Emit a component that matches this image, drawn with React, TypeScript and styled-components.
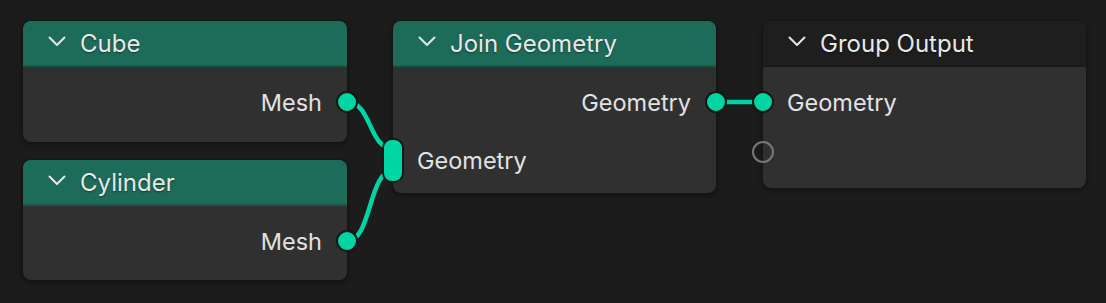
import styled, { createGlobalStyle } from 'styled-components'

const TEAL = '#00d6a3'

const GlobalStyle = createGlobalStyle`
  html, body {
    margin: 0;
    padding: 0;
    background: #1c1c1c;
  }
  body {
    font-family: Inter, 'Noto Sans', 'DejaVu Sans', sans-serif;
  }
`

const Canvas = styled.div`
  position: relative;
  width: 1106px;
  height: 303px;
  background: #1c1c1c;
  overflow: hidden;
`

const Links = styled.svg`
  position: absolute;
  left: 0;
  top: 0;
  width: 1106px;
  height: 303px;
  pointer-events: none;
`

const Node = styled.div<{ $x: number; $y: number; $w: number; $h: number }>`
  position: absolute;
  left: ${(p) => p.$x}px;
  top: ${(p) => p.$y}px;
  width: ${(p) => p.$w}px;
  height: ${(p) => p.$h}px;
  display: flex;
  flex-direction: column;
  background: #303030;
  border-radius: 8px;
  box-shadow: 0 0 0 1px #151515, 0 2px 6px rgba(0, 0, 0, 0.45);
`

const Header = styled.div<{ $dark?: boolean }>`
  height: 46px;
  box-sizing: border-box;
  display: flex;
  align-items: center;
  gap: 14px;
  padding-left: 25px;
  background: ${(p) => (p.$dark ? '#1e1e1e' : '#1d6c5a')};
  border-bottom: 2px solid ${(p) => (p.$dark ? '#191919' : '#1a5849')};
  border-radius: 8px 8px 0 0;
  color: #e8e8e8;
  font-size: 24px;
  text-shadow: 0 1px 2px rgba(0, 0, 0, 0.45);
`

const Chevron = styled.svg`
  width: 18px;
  height: 11px;
  margin-top: -3px;
  flex: none;
`

const Body = styled.div`
  flex: 1;
  display: flex;
  flex-direction: column;
  padding-top: 10px;
`

const Row = styled.div<{ $side: 'in' | 'out'; $h?: number }>`
  position: relative;
  height: ${(p) => p.$h ?? 50}px;
  display: flex;
  align-items: center;
  justify-content: ${(p) => (p.$side === 'out' ? 'flex-end' : 'flex-start')};
  padding: 0 25px 0 24px;
  color: #e2e2e2;
  font-size: 23.5px;
`

const Socket = styled.span<{ $side: 'in' | 'out'; $empty?: boolean }>`
  position: absolute;
  top: 50%;
  ${(p) => (p.$side === 'out' ? 'right: -11px;' : 'left: -11px;')}
  width: 18px;
  height: 18px;
  margin-top: -11px;
  border-radius: 50%;
  border: 2px solid ${(p) => (p.$empty ? '#777777' : '#161616')};
  background: ${(p) => (p.$empty ? 'transparent' : TEAL)};
`

const MultiSocket = styled.span`
  position: absolute;
  top: 50%;
  left: -11px;
  width: 18px;
  height: 41px;
  margin-top: -22px;
  border-radius: 10px;
  border: 2px solid #161616;
  background: ${TEAL};
`

const ChevronIcon = () => (
  <Chevron viewBox='0 0 18 11'>
    <polyline points='1.5,1.5 9,9 16.5,1.5' fill='none' stroke='#e6e6e6' strokeWidth='2' strokeLinecap='round' strokeLinejoin='round' />
  </Chevron>
)

interface NodeHeadProps {
  title: string
  dark?: boolean
}

const NodeHead = ({ title, dark }: NodeHeadProps) => (
  <Header $dark={dark}>
    <ChevronIcon />
    <span>{title}</span>
  </Header>
)

export default function App() {
  return (
    <Canvas>
      <GlobalStyle />
      <Links viewBox='0 0 1106 303'>
        <g fill='none' stroke={TEAL} strokeWidth='4.5' strokeLinecap='round'>
          <path d='M347 102 C372 102 368 149 394 149' />
          <path d='M347 241 C372 241 368 170 394 170' />
          <path d='M716 102 L762 102' />
        </g>
      </Links>

      <Node $x={23} $y={21} $w={324} $h={121}>
        <NodeHead title='Cube' />
        <Body>
          <Row $side='out'>
            Mesh
            <Socket $side='out' />
          </Row>
        </Body>
      </Node>

      <Node $x={23} $y={160} $w={324} $h={120}>
        <NodeHead title='Cylinder' />
        <Body>
          <Row $side='out'>
            Mesh
            <Socket $side='out' />
          </Row>
        </Body>
      </Node>

      <Node $x={393} $y={21} $w={323} $h={172}>
        <NodeHead title='Join Geometry' />
        <Body>
          <Row $side='out'>
            Geometry
            <Socket $side='out' />
          </Row>
          <Row $side='in' $h={66}>
            <MultiSocket />
            Geometry
          </Row>
        </Body>
      </Node>

      <Node $x={763} $y={21} $w={323} $h={167}>
        <NodeHead title='Group Output' dark />
        <Body>
          <Row $side='in'>
            <Socket $side='in' />
            Geometry
          </Row>
          <Row $side='in'>
            <Socket $side='in' $empty />
          </Row>
        </Body>
      </Node>
    </Canvas>
  )
}
